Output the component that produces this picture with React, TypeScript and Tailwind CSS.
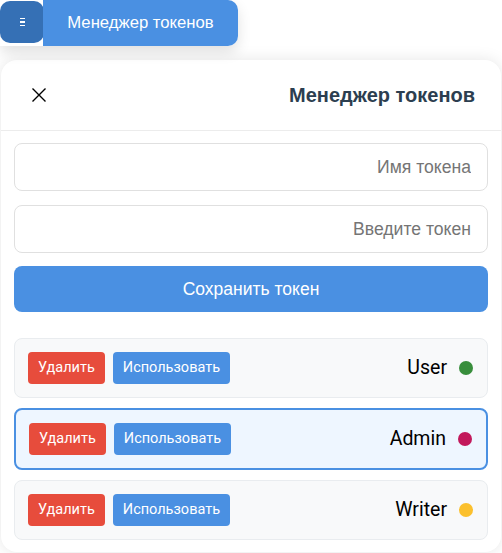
type Token = { name: string; color: string; active?: boolean };

const tokens: Token[] = [
  { name: "User", color: "bg-[#388e3c]" },
  { name: "Admin", color: "bg-[#c2185b]", active: true },
  { name: "Writer", color: "bg-[#fbc02d]" },
];

function TokenRow({ token }: { token: Token }) {
  return (
    <div
      className={`flex items-center justify-between rounded-lg ${
        token.active
          ? "border-2 border-[#4a90e2] bg-[#eef6ff] px-[13px] py-[13px]"
          : "border border-[#e9ecef] bg-[#f8f9fa] px-[13px] py-[13px]"
      }`}
    >
      <div className="flex gap-2">
        <button
          type="button"
          className="h-8 rounded bg-[#e74c3c] px-[10px] text-[14.5px] text-white"
        >
          Удалить
        </button>
        <button
          type="button"
          className="h-8 rounded bg-[#4a90e2] px-[10px] text-[14.5px] text-white"
        >
          Использовать
        </button>
      </div>
      <div className="flex items-center gap-[12px] pr-[1px]">
        <span className="text-[19.5px] leading-6 text-black">{token.name}</span>
        <span className={`h-[14px] w-[14px] rounded-full ${token.color}`} />
      </div>
    </div>
  );
}

export default function App() {
  return (
    <div className="relative h-[553px] w-[502px] overflow-hidden bg-white font-['Liberation_Sans',Arial,sans-serif]">
      <div className="absolute left-0 top-0 z-10 flex rounded-r-[10px] shadow-[0_6px_14px_rgba(0,0,0,0.12)]">
        <button
          type="button"
          className="mt-[1px] flex h-[42px] w-[44px] flex-col items-center justify-center gap-[2px] rounded-[10px] bg-[#3570b5]"
        >
          <span className="h-[1.5px] w-[5px] bg-white" />
          <span className="h-[1.5px] w-[5px] bg-white" />
          <span className="h-[1.5px] w-[5px] bg-white" />
        </button>
        <div className="-ml-[1px] flex h-[46px] w-[195px] items-center justify-center rounded-r-[10px] bg-[#4a90e2] text-[16.7px] text-white">
          Менеджер токенов
        </div>
      </div>

      <div className="ml-[1px] mt-[60px] w-[500px] rounded-2xl bg-white shadow-[0_0_16px_rgba(0,0,0,0.1)]">
        <div className="flex h-[71px] items-center justify-between border-b border-[#ececec] pl-[30px] pr-[26px]">
          <svg width="16" height="16" viewBox="0 0 16 16" className="text-black">
            <path d="M1.5 1.5 L14.5 14.5 M14.5 1.5 L1.5 14.5" stroke="currentColor" strokeWidth="1.4" fill="none" />
          </svg>
          <h2 className="text-[20px] font-bold text-[#2c3e50]">Менеджер токенов</h2>
        </div>

        <div className="px-[13px] pb-[12px] pt-[12px]">
          <div className="flex flex-col gap-[14px]">
            <input
              placeholder="Имя токена"
              className="h-[48px] w-full rounded-lg border border-[#e0e0e0] bg-white px-4 text-right text-[17.6px] outline-none placeholder:text-[#757575]"
            />
            <input
              placeholder="Введите токен"
              className="h-[48px] w-full rounded-lg border border-[#e0e0e0] bg-white px-4 text-right text-[17.6px] outline-none placeholder:text-[#757575]"
            />
          </div>
          <button
            type="button"
            className="mt-[13px] h-[46px] w-full rounded-lg bg-[#4a90e2] text-[17.5px] text-white"
          >
            Сохранить токен
          </button>

          <div className="mt-[26px] flex flex-col gap-[10px] font-['Roboto',sans-serif]">
            {tokens.map((t) => (
              <TokenRow key={t.name} token={t} />
            ))}
          </div>
        </div>
      </div>
    </div>
  );
}
